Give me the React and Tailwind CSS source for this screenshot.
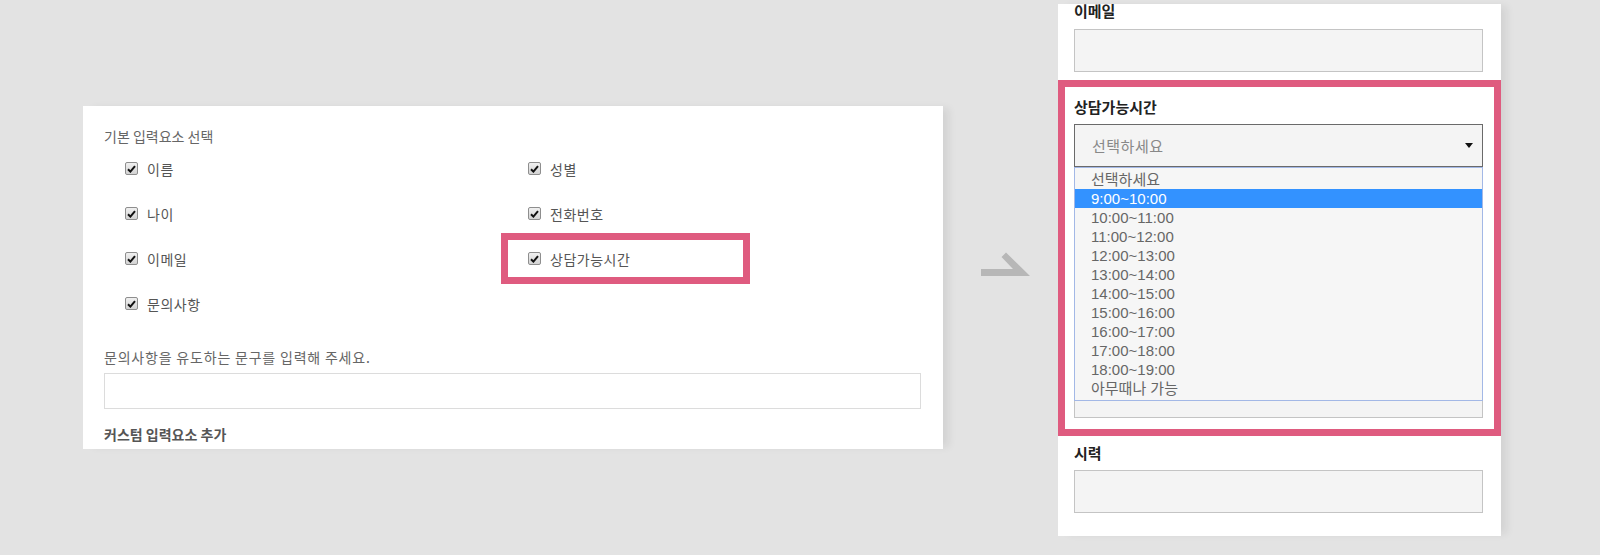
import React from "react";

const KR = { fontFamily: '"Noto Sans CJK KR", "Liberation Sans", sans-serif' };

const leftItems = [
  ["이름", "성별"],
  ["나이", "전화번호"],
  ["이메일", "상담가능시간"],
  ["문의사항", null],
];

const timeOptions = [
  "선택하세요",
  "9:00~10:00",
  "10:00~11:00",
  "11:00~12:00",
  "12:00~13:00",
  "13:00~14:00",
  "14:00~15:00",
  "15:00~16:00",
  "16:00~17:00",
  "17:00~18:00",
  "18:00~19:00",
  "아무때나 가능",
];

function Check() {
  return (
    <span className="flex h-[13px] w-[13px] shrink-0 items-center justify-center rounded-[2px] border border-[#8e8e8e] bg-gradient-to-b from-[#f0f0f0] to-[#d4d4d4]">
      <svg width="9" height="8" viewBox="0 0 9 8">
        <path d="M1 4.2 L3.4 6.6 L8 1.2" fill="none" stroke="#111" strokeWidth="2" />
      </svg>
    </span>
  );
}

function CheckItem({ label }) {
  return (
    <div className="flex h-[45px] items-center gap-[9px] text-[14px] leading-[20px] tracking-[0.5px] text-[#555]">
      <Check />
      <span>{label}</span>
    </div>
  );
}

function LeftPanel() {
  return (
    <div
      className="relative ml-[83px] mt-[106px] h-[343px] w-[860px] shrink-0 overflow-hidden bg-white px-[21px] pt-[20px] shadow-[8px_0_8px_-2px_rgba(0,0,0,0.07)]"
      style={KR}
    >
      <div className="text-[14px] leading-[20px] text-[#666]">기본 입력요소 선택</div>
      <div className="pl-[21px]">
        {leftItems.map(([a, b], i) => (
          <div key={i} className="flex">
            <div className="w-[403px]">
              <CheckItem label={a} />
            </div>
            <div>{b && <CheckItem label={b} />}</div>
          </div>
        ))}
      </div>
      <div className="mt-[21px] text-[14px] leading-[20px] tracking-[0.8px] text-[#666]">
        문의사항을 유도하는 문구를 입력해 주세요.
      </div>
      <div className="mt-[6px] h-[36px] w-[817px] border border-[#dcdcdc] bg-white" />
      <div className="mt-[15px] text-[14px] font-bold leading-[20px] text-[#555]">
        커스텀 입력요소 추가
      </div>
      <div className="absolute left-[418px] top-[127px] h-[51px] w-[249px] border-[7px] border-[#df5b7f]" />
    </div>
  );
}

function Arrow() {
  return (
    <svg className="ml-[37px] mt-[250px] shrink-0" width="52" height="28" viewBox="0 0 52 28">
      <polygon points="1,19 33,19 21.5,7 26,2.5 50,26 1,26" fill="#b7b7b7" />
    </svg>
  );
}

function RightPanel() {
  return (
    <div
      className="ml-[26px] mt-[4px] h-[532px] w-[443px] shrink-0 bg-white shadow-[8px_0_8px_-2px_rgba(0,0,0,0.07)]"
      style={KR}
    >
      <div className="px-[16px]">
        <div className="text-[15px] font-bold leading-[14px] text-[#222]">이메일</div>
        <div className="mt-[11px] h-[43px] w-[409px] border border-[#c4c4c4] bg-[#f4f4f4]" />
      </div>
      <div className="mt-[8px] border-[7px] border-[#df5b7f] pb-[11px] pl-[9px] pt-[10px]">
        <div className="text-[15px] font-bold leading-[20px] text-[#222]">상담가능시간</div>
        <div className="mt-[7px] flex h-[43px] w-[409px] items-center justify-between border border-[#6a6a6a] bg-[#f4f4f4] pl-[17px] pr-[9px]">
          <span className="text-[15px] leading-[20px] tracking-[0.5px] text-[#888]">선택하세요</span>
          <span className="h-0 w-0 border-x-[4px] border-t-[5px] border-x-transparent border-t-[#111]" />
        </div>
        <div
          className="h-[234px] w-[409px] border border-[#a3b8e6] bg-[#f6f6f6] py-[2px] text-[15px] leading-[19px] text-[#666]"
          style={{ fontFamily: '"Liberation Sans", "Noto Sans CJK KR", sans-serif' }}
        >
          {timeOptions.map((t, i) => (
            <div
              key={t}
              className={
                i === 1
                  ? "h-[19px] bg-[#3392ff] pl-[16px] text-white"
                  : "h-[19px] pl-[16px]"
              }
            >
              {t}
            </div>
          ))}
        </div>
        <div className="h-[17px] w-[409px] border-x border-b border-[#c4c4c4] bg-[#f4f4f4]" />
      </div>
      <div className="px-[16px]">
        <div className="mt-[7px] text-[15px] font-bold leading-[20px] text-[#222]">시력</div>
        <div className="mt-[7px] h-[43px] w-[409px] border border-[#c4c4c4] bg-[#f4f4f4]" />
      </div>
    </div>
  );
}

export default function App() {
  return (
    <div className="flex h-[555px] w-[1600px] items-start overflow-hidden bg-[#e3e3e3]">
      <LeftPanel />
      <Arrow />
      <RightPanel />
    </div>
  );
}
